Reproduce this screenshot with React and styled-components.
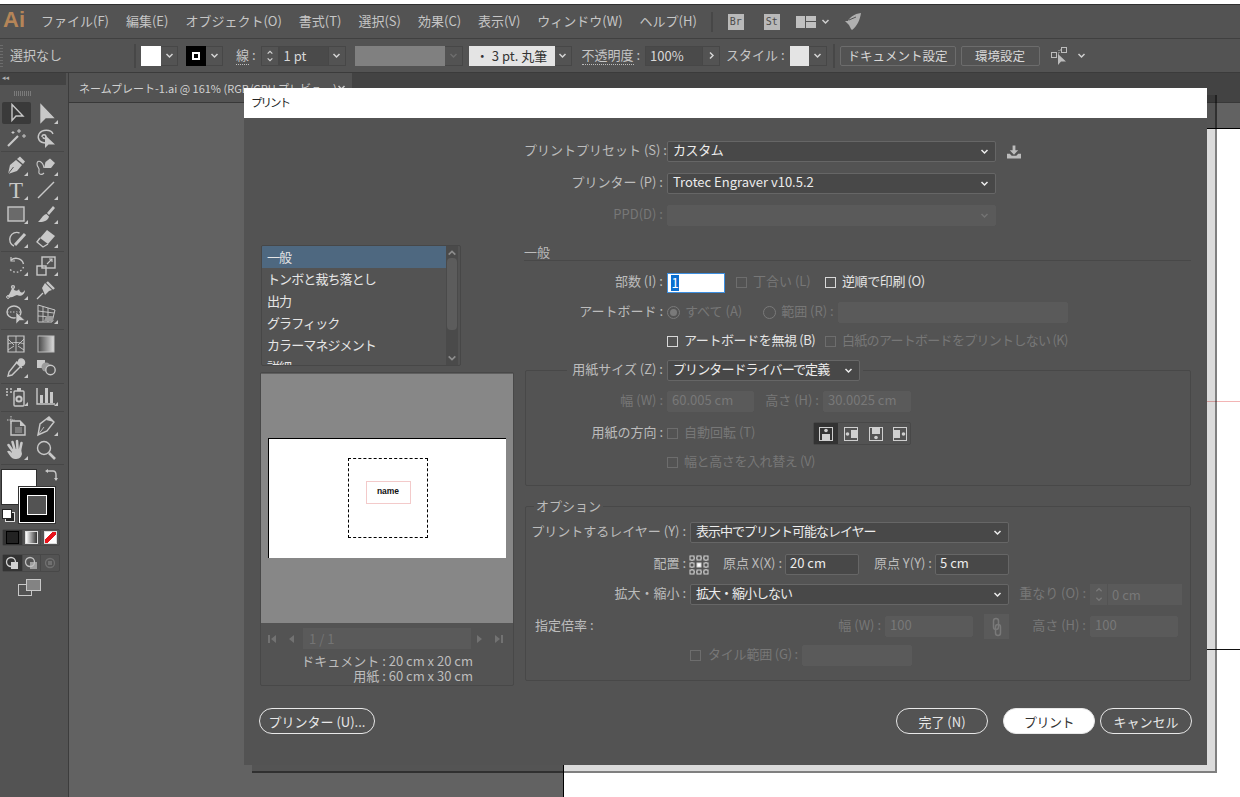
import React from "react";
import styled, { createGlobalStyle } from "styled-components";

const GlobalStyle = createGlobalStyle`
  html, body {
    margin: 0;
    padding: 0;
    background: #fff;
    overflow: hidden;
  }
  * {
    box-sizing: border-box;
  }
  body {
    font-family: "Noto Sans CJK JP", "Noto Sans", sans-serif;
    font-size: 13px;
  }
`;

const Page = styled.div`
  position: relative;
  width: 1240px;
  height: 797px;
  overflow: hidden;
  display: flex;
  flex-direction: column;
  padding-top: 4px;
  background: #fff;
`;

/* ---------- menu bar ---------- */

const MenuBar = styled.div`
  height: 35px;
  flex: none;
  display: flex;
  align-items: center;
  background: #535353;
  border-top: 1px solid #303030;
  border-bottom: 1px solid #404040;
  padding-left: 3px;
  color: #c6c6c6;
`;

const Logo = styled.span`
  font-family: "Liberation Sans", sans-serif;
  font-weight: 700;
  font-size: 22px;
  color: #b58558;
  width: 38px;
  padding-bottom: 3px;
`;

const MenuItem = styled.span`
  margin-right: 17px;
  padding-bottom: 3px;
  white-space: nowrap;
  font-size: 13px;
`;

const VLine = styled.span`
  width: 2px;
  height: ${(p) => p.$h || 20}px;
  background: #474747;
  margin-left: ${(p) => p.$ml || 0}px;
  margin-right: ${(p) => p.$mr || 0}px;
  flex: none;
`;

const AppBadge = styled.span`
  width: 16px;
  height: 16px;
  background: #b9b9b9;
  color: #4c4c4c;
  font-family: "DejaVu Sans Mono", monospace;
  font-size: 10px;
  line-height: 16px;
  text-align: center;
  margin-right: ${(p) => p.$mr || 0}px;
  flex: none;
`;

const BarIcon = styled.span`
  display: flex;
  flex: none;
  margin-left: ${(p) => p.$ml || 0}px;
  color: ${(p) => p.$color || "#cfcfcf"};
`;

/* ---------- control bar ---------- */

const OptionBar = styled.div`
  height: 34px;
  flex: none;
  display: flex;
  align-items: center;
  background: #535353;
  border-bottom: 1px solid #3b3b3b;
  color: #c6c6c6;
`;

const Grip = styled.span`
  width: 3px;
  height: 22px;
  margin-right: 7px;
  background: repeating-linear-gradient(to bottom, #6c6c6c 0 1px, transparent 1px 3px);
`;

const BarText = styled.span`
  white-space: nowrap;
  margin-left: ${(p) => p.$ml || 0}px;
  width: ${(p) => (p.$w ? `${p.$w}px` : "auto")};
  flex: none;
  padding-bottom: 2px;
`;

const Dotted = styled.span`
  border-bottom: 1px dotted #bdbdbd;
  line-height: 15px;
`;

const Swatch = styled.span`
  width: ${(p) => p.$w || 20}px;
  height: 20px;
  flex: none;
  margin-left: ${(p) => p.$ml || 0}px;
  background: ${(p) => p.$bg || "#fff"};
  display: flex;
  align-items: center;
  justify-content: center;
  color: #333;
  font-size: 13px;
  white-space: nowrap;
`;

const InnerStroke = styled.span`
  width: 8px;
  height: 8px;
  border: 2px solid #fff;
`;

const ChevBox = styled.span`
  width: ${(p) => p.$w || 17}px;
  height: 20px;
  flex: none;
  border: 1px solid #474747;
  border-left: none;
  display: flex;
  align-items: center;
  justify-content: center;
  color: ${(p) => p.$color || "#d4d4d4"};
`;

const FieldBox = styled.span`
  width: ${(p) => p.$w}px;
  height: 20px;
  flex: none;
  margin-left: ${(p) => p.$ml || 0}px;
  background: #4a4a4a;
  border: 1px solid #474747;
  padding-left: 4px;
  line-height: 18px;
  color: #d8d8d8;
  white-space: nowrap;
`;

const SpinBox = styled.span`
  width: 18px;
  height: 20px;
  flex: none;
  margin-left: ${(p) => p.$ml || 0}px;
  border: 1px solid #474747;
  color: #d4d4d4;
  display: flex;
  flex-direction: column;
  align-items: center;
  justify-content: space-around;
  padding: 2px 0;
`;

const BarButton = styled.span`
  height: 20px;
  width: ${(p) => p.$w}px;
  flex: none;
  margin-left: ${(p) => p.$ml || 0}px;
  border: 1px solid #6c6c6c;
  border-radius: 2px;
  color: #d8d8d8;
  font-size: 12.5px;
  line-height: 17px;
  text-align: center;
  white-space: nowrap;
`;

/* ---------- workspace ---------- */

const Workspace = styled.div`
  flex: 1;
  display: flex;
  min-height: 0;
`;

const ToolColumn = styled.div`
  width: 69px;
  flex: none;
  background: #535353;
  border-right: 1px solid #3c3c3c;
  display: flex;
  flex-direction: column;
`;

const PanelHead = styled.div`
  height: 12px;
  width: 66px;
  background: #434343;
  color: #b0b0b0;
  font-size: 7px;
  line-height: 11px;
  padding-left: 2px;
  font-family: "DejaVu Sans", sans-serif;
`;

const PanelGrip = styled.div`
  height: 17px;
  display: flex;
  align-items: center;
  justify-content: center;
  width: 44px;
  &::before {
    content: "";
    width: 17px;
    height: 5px;
    background: repeating-linear-gradient(to right, #7a7a7a 0 1px, transparent 1px 2px);
  }
`;

const ToolGroup = styled.div`
  display: grid;
  grid-template-columns: repeat(2, 30px);
  grid-auto-rows: 24px;
  margin: 0 4px ${(p) => (p.$mb === undefined ? 2 : p.$mb)}px 1px;
  padding-bottom: ${(p) => p.$pb || 1}px;
  border-bottom: 1px solid #474747;
`;

const Tool = styled.div`
  position: relative;
  display: flex;
  align-items: center;
  justify-content: center;
  color: #c8c8c8;
  border-radius: 2px;
  background: ${(p) => (p.$active ? "#3a3a3a" : "transparent")};
  margin: ${(p) => (p.$active ? "0 0 2px 1px" : "0")};
  font-family: "Liberation Serif", serif;
  font-size: 23px;
  line-height: 1;
  &::after {
    content: "";
    display: ${(p) => (p.$flag ? "block" : "none")};
    position: absolute;
    right: 3px;
    bottom: 2px;
    width: 0;
    height: 0;
    border-left: 4px solid transparent;
    border-bottom: 4px solid #c8c8c8;
  }
`;

const ColorArea = styled.div`
  position: relative;
  height: 60px;
  flex: none;
`;

const FillBox = styled.div`
  position: absolute;
  left: 1px;
  top: 4px;
  width: 36px;
  height: 36px;
  background: #fff;
  border: 1px solid #2e2e2e;
`;

const StrokeBox = styled.div`
  position: absolute;
  left: 19px;
  top: 22px;
  width: 36px;
  height: 36px;
  background: #000;
  border: 1px solid #fff;
  outline: 1px solid #333;
  display: flex;
  align-items: center;
  justify-content: center;
  &::before {
    content: "";
    width: 18px;
    height: 18px;
    background: #535353;
    border: 1px solid #fff;
  }
`;

const SwapMark = styled.div`
  position: absolute;
  left: 44px;
  top: 2px;
  color: #c8c8c8;
`;

const DefaultMark = styled.div`
  position: absolute;
  left: 2px;
  top: 44px;
  width: 10px;
  height: 10px;
  background: #fff;
  border: 1px solid #222;
  box-shadow: 3px 3px 0 -1px #222, 3px 3px 0 0 #ddd;
`;

const ModeRow = styled.div`
  display: grid;
  grid-template-columns: repeat(3, 1fr);
  width: 58px;
  height: ${(p) => p.$h}px;
  margin: ${(p) => p.$m};
  border: 1px solid #484848;
  border-radius: 2px;
`;

const ModeCell = styled.div`
  display: flex;
  align-items: center;
  justify-content: center;
  background: ${(p) => (p.$active ? "#333" : "transparent")};
  border-left: ${(p) => (p.$first ? "none" : "1px solid #484848")};
`;

const ModeSquare = styled.span`
  width: 13px;
  height: 13px;
  border: 1px solid ${(p) => p.$line || "#ddd"};
  background: ${(p) => p.$bg || "#000"};
`;

const ScreenMode = styled.div`
  display: flex;
  justify-content: center;
  width: 60px;
  margin-top: 7px;
  color: #c8c8c8;
`;

const DocColumn = styled.div`
  flex: 1;
  min-width: 0;
  display: flex;
  flex-direction: column;
`;

const TabBar = styled.div`
  height: 30px;
  flex: none;
  background: #434343;
  border-bottom: 1px solid #383838;
`;

const DocTab = styled.div`
  width: 283px;
  height: 29px;
  background: #535353;
  color: #d0d0d0;
  font-size: 11px;
  padding-left: 10px;
  padding-right: 6px;
  white-space: nowrap;
  display: flex;
  align-items: center;
  justify-content: space-between;
`;

const Canvas = styled.div`
  flex: 1;
  display: flex;
  min-height: 0;
  background: #626262;
  padding: 25px 0 0 494px;
`;

const Artboard = styled.div`
  position: relative;
  flex: 1;
  background: #fff;
  border-top: 1px solid #000;
  border-left: 1px solid #000;
`;

const GuideLine = styled.div`
  position: absolute;
  right: 0;
  top: ${(p) => p.$top}px;
  width: 33px;
  height: 1px;
  background: ${(p) => p.$color};
`;

/* ---------- print dialog ---------- */

const DialogShadow = styled.div`
  position: absolute;
  left: 252px;
  top: 95px;
  width: 965px;
  height: 678px;
  background: rgba(0, 0, 0, 0.14);
  border-right: 2px solid rgba(0, 0, 0, 0.42);
  border-bottom: 2px solid rgba(0, 0, 0, 0.42);
`;

const Dialog = styled.div`
  position: absolute;
  left: 244px;
  top: 88px;
  width: 963px;
  height: 677px;
  background: #535353;
  display: flex;
  flex-direction: column;
  color: #c4c4c4;
`;

const TitleBar = styled.div`
  height: 30px;
  flex: none;
  background: #fff;
  color: #222;
  font-size: 11.5px;
  letter-spacing: -2px;
  line-height: 29px;
  padding-left: 7px;
`;

const DialogBody = styled.div`
  flex: 1;
  display: grid;
  grid-template-columns: 254px 667px;
  column-gap: 10px;
  padding: 23px 0 0 16px;
`;

const LeftColumn = styled.div`
  display: flex;
  flex-direction: column;
  padding-top: 104px;
`;

const StepList = styled.div`
  position: relative;
  width: 200px;
  height: 121px;
  margin-left: 1px;
  border: 1px solid #474747;
  border-radius: 2px;
  overflow: hidden;
`;

const StepItem = styled.div`
  height: 22px;
  width: 184px;
  padding-left: 5px;
  line-height: 22px;
  letter-spacing: -0.9px;
  color: #e6e6e6;
  background: ${(p) => (p.$on ? "#4e6880" : "transparent")};
`;

const ScrollTrack = styled.div`
  position: absolute;
  right: 2px;
  top: 0;
  bottom: 0;
  width: 12px;
  background: #4a4a4a;
  display: flex;
  flex-direction: column;
  align-items: center;
  justify-content: space-between;
  padding: 2px 0;
  color: #8c8c8c;
`;

const ScrollThumb = styled.div`
  position: absolute;
  left: 1px;
  top: 12px;
  width: 10px;
  height: 72px;
  background: #5c5c5c;
  border-radius: 4px;
`;

const PreviewPanel = styled.div`
  margin-top: 6px;
  width: 254px;
  height: 314px;
  border: 1px solid #484848;
  border-radius: 2px;
  display: flex;
  flex-direction: column;
`;

const PreviewPaper = styled.div`
  height: 250px;
  flex: none;
  background: #878787;
  padding: 64px 7px 0 7px;
  border-top: 1px solid #5f5f5f;
`;

const PaperSheet = styled.div`
  height: 120px;
  background: #fff;
  border-top: 1px solid #000;
  border-left: 1px solid #000;
  display: flex;
  justify-content: center;
  padding-top: 19px;
`;

const DashBox = styled.div`
  width: 80px;
  height: 80px;
  border: 1px dashed #000;
  display: flex;
  justify-content: center;
  padding-top: 22px;
`;

const NameBox = styled.div`
  width: 45px;
  height: 23px;
  border: 1px solid #f3caca;
  background: #fff;
  margin-left: 1px;
  color: #111;
  font-family: "Liberation Sans", sans-serif;
  font-weight: 700;
  font-size: 8.5px;
  line-height: 18px;
  text-align: center;
`;

const PagerRow = styled.div`
  height: 21px;
  margin-top: 5px;
  display: flex;
  align-items: center;
  color: #727272;
`;

const PagerIcon = styled.span`
  width: 12px;
  display: flex;
  justify-content: center;
  margin-left: ${(p) => p.$ml || 0}px;
`;

const PagerField = styled.div`
  width: 168px;
  height: 21px;
  margin-left: 5px;
  background: #5a5a5a;
  padding-left: 6px;
  line-height: 21px;
  color: #747474;
`;

const DocInfo = styled.div`
  padding: 5px 40px 0 0;
  text-align: right;
  color: #bdbdbd;
  line-height: 14.5px;
  font-size: 13px;
`;

const PillButton = styled.button`
  width: ${(p) => p.$w}px;
  height: 26px;
  flex: none;
  border-radius: 13px;
  border: 1px solid #e8e8e8;
  background: ${(p) => (p.$primary ? "#fff" : "transparent")};
  color: ${(p) => (p.$primary ? "#333" : "#e8e8e8")};
  font-family: inherit;
  font-size: 13px;
  letter-spacing: ${(p) => p.$ls || 0}px;
  padding: 0;
  margin-left: ${(p) => p.$ml || 0}px;
`;

const PrinterButton = styled(PillButton)`
  margin-top: 22px;
  margin-left: -1px;
`;

const RightColumn = styled.div`
  display: flex;
  flex-direction: column;
  min-width: 0;
`;

const Row = styled.div`
  display: flex;
  align-items: center;
  height: ${(p) => p.$h || 21}px;
  flex: none;
  margin-top: ${(p) => p.$mt || 0}px;
  margin-left: ${(p) => p.$ml || 0}px;
`;

const Label = styled.span`
  flex: none;
  width: ${(p) => (p.$w ? `${p.$w}px` : "auto")};
  margin-left: ${(p) => p.$ml || 0}px;
  margin-right: ${(p) => (p.$mr === undefined ? 4 : p.$mr)}px;
  padding-bottom: 4px;
  text-align: ${(p) => p.$align || "right"};
  letter-spacing: ${(p) => p.$ls || 0}px;
  white-space: nowrap;
  color: ${(p) => (p.$off ? "#777" : p.$bright ? "#e4e4e4" : "#bcbcbc")};
`;

const Select = styled.div`
  flex: none;
  width: ${(p) => p.$w}px;
  height: 21px;
  border: 1px solid ${(p) => (p.$off ? "#5a5a5a" : "#666")};
  border-radius: 2px;
  background: ${(p) => (p.$off ? "#5a5a5a" : "#484848")};
  color: ${(p) => (p.$off ? "#737373" : "#ececec")};
  letter-spacing: ${(p) => p.$ls || 0}px;
  display: flex;
  align-items: center;
  justify-content: space-between;
  padding: 0 6px 4px 5px;
  white-space: nowrap;
  & > svg {
    margin-top: 4px;
  }
`;

const TextField = styled.div`
  flex: none;
  width: ${(p) => p.$w}px;
  height: 21px;
  margin-left: ${(p) => p.$ml || 0}px;
  border-radius: 2px;
  border: 1px solid ${(p) => (p.$off ? "#5a5a5a" : "#666")};
  background: ${(p) => (p.$off ? "#5a5a5a" : "#484848")};
  color: ${(p) => (p.$off ? "#787878" : "#ececec")};
  line-height: 16px;
  padding-left: 4px;
  white-space: nowrap;
`;

const FocusField = styled.div`
  flex: none;
  width: 58px;
  height: 20px;
  background: #fff;
  border: 1px solid #3d8fe0;
  color: #fff;
  padding: 1px 0 0 3px;
  line-height: 16px;
  & > span {
    display: inline-block;
    background: #0b6fd0;
    width: 8px;
    height: 16px;
    text-align: center;
  }
`;

const Check = styled.span`
  width: 11px;
  height: 11px;
  flex: none;
  margin-left: ${(p) => p.$ml || 0}px;
  margin-right: ${(p) => p.$mr || 6}px;
  border: 1px solid ${(p) => (p.$off ? "#6d6d6d" : "#d8d8d8")};
`;

const Radio = styled.span`
  width: 13px;
  height: 13px;
  flex: none;
  margin-left: ${(p) => p.$ml || 0}px;
  margin-right: 5px;
  border-radius: 50%;
  border: 1px solid #7a7a7a;
  display: flex;
  align-items: center;
  justify-content: center;
  &::before {
    content: "";
    display: ${(p) => (p.$on ? "block" : "none")};
    width: 7px;
    height: 7px;
    border-radius: 50%;
    background: #7a7a7a;
  }
`;

const SectionHead = styled.div`
  height: 18px;
  flex: none;
  margin-top: 17px;
  border-bottom: 1px solid #484848;
  line-height: 17px;
  color: #bcbcbc;
`;

const FieldGroup = styled.div`
  height: ${(p) => p.$h}px;
  flex: none;
  margin-top: ${(p) => p.$mt}px;
  margin-left: 1px;
  border: 1px solid #484848;
  border-radius: 2px;
`;

const LegendRow = styled(Row)`
  width: 296px;
  background: #535353;
`;

const LegendText = styled.div`
  width: fit-content;
  height: 18px;
  margin: -10px 0 0 8px;
  padding: 0 2px;
  background: #535353;
  color: #bcbcbc;
  line-height: 17px;
`;

const OrientGroup = styled.div`
  flex: none;
  display: grid;
  grid-template-columns: 24px 25px 25px 24px;
  height: 23px;
  width: 98px;
  margin-left: 61px;
  border: 1px solid #484848;
  border-radius: 2px;
`;

const OrientCell = styled.div`
  display: flex;
  align-items: center;
  justify-content: center;
  background: ${(p) => (p.$on ? "#333" : "transparent")};
  color: #cfcfcf;
`;

const LinkButton = styled.div`
  flex: none;
  width: 25px;
  height: 25px;
  margin-left: 11px;
  background: #5a5a5a;
  color: #797979;
  display: flex;
  align-items: center;
  justify-content: center;
`;

const StepperField = styled.div`
  flex: none;
  width: 92px;
  height: 21px;
  background: #5a5a5a;
  color: #787878;
  display: flex;
  align-items: center;
  padding-bottom: 0;
`;

const StepperArrows = styled.span`
  width: 18px;
  height: 100%;
  border-right: 1px solid #535353;
  margin-right: 4px;
  display: flex;
  flex-direction: column;
  align-items: center;
  justify-content: space-around;
  padding: 2px 0;
`;

const FooterRight = styled.div`
  display: flex;
  margin-top: 27px;
  justify-content: flex-end;
  margin-right: -1px;
`;

/* ---------- small drawings ---------- */

const Chev = ({ dir = "down", size = 9 }) => {
  const d = {
    down: "M1.5 3 L4.5 6 L7.5 3",
    up: "M1.5 6 L4.5 3 L7.5 6",
    right: "M3 1.5 L6 4.5 L3 7.5",
  }[dir];
  return (
    <svg width={size} height={size} viewBox="0 0 9 9" fill="none" stroke="currentColor" strokeWidth="1.5">
      <path d={d} />
    </svg>
  );
};

const Ico = ({ children }) => (
  <svg width="22" height="22" viewBox="0 0 22 22" fill="none" stroke="currentColor" strokeWidth="1.4">
    {children}
  </svg>
);

const tools1 = [
  {
    active: true,
    svg: <path d="M6 2.5 V18.5 L10 14 H17 Z" stroke="#c8c8c8" />,
  },
  { flag: true, svg: <path d="M6 2 V19 L10.5 14.5 H18 Z" fill="currentColor" /> },
  {
    svg: (
      <>
        <path d="M3 19 L13 9" strokeWidth="2.2" />
        <path d="M14 2 V6 M12 4 H16 M19 7 V11 M17 9 H21 M8 4 V7 M6.5 5.5 H9.5" strokeWidth="1" />
      </>
    ),
  },
  {
    svg: (
      <>
        <path d="M11 16 C4 16 2 11 4 7 C7 2 16 2 18 7" />
        <path d="M7 10 C7 7 11 7 11 10 C11 12 8 12 8 10" />
        <path d="M10 8 V21 L13.5 17.5 H20 Z" fill="currentColor" stroke="none" />
      </>
    ),
  },
];

const tools2 = [
  {
    flag: true,
    svg: (
      <>
        <path d="M3 19 L5 10 L11 5 L17 10 L12 16 Z" fill="currentColor" stroke="none" />
        <path d="M12 4 L15 1.5 L20 6.5 L18 9" fill="currentColor" stroke="none" />
        <path d="M3 19 L8.5 12" stroke="#535353" strokeWidth="1" />
      </>
    ),
  },
  {
    flag: true,
    svg: (
      <>
        <path d="M9 13 L10.5 7 L15 3.5 L20 8 L16 13 Z" fill="currentColor" stroke="none" />
        <path d="M9 13 C8 6 2 4 2 9 C2 13 5 12 4 16 C3 20 7 20 9 18" strokeWidth="1.1" />
      </>
    ),
  },
  { flag: true, text: "T" },
  { flag: true, svg: <path d="M3 19 L19 3" /> },
  { flag: true, svg: <rect x="3" y="4" width="16" height="14" fill="#6a6a6a" stroke="#c8c8c8" /> },
  {
    flag: true,
    svg: (
      <>
        <path d="M12 10 L18 3 L20 5 L14 12 Z" fill="currentColor" stroke="none" />
        <path d="M11.5 11 L14 13.5 C13 18 8 19.5 3 19 C6 17 7 12 11.5 11 Z" fill="currentColor" stroke="none" />
      </>
    ),
  },
  {
    flag: true,
    svg: (
      <>
        <path d="M14.5 6 A7 7 0 1 0 9 19" />
        <path d="M10 18 L20 7" strokeWidth="3" />
      </>
    ),
  },
  {
    flag: true,
    svg: (
      <>
        <path d="M12 3 L20 9 L13 17 L5 11 Z" fill="currentColor" stroke="none" />
        <path d="M5 11 L2 15 L8 20 L13 17" />
      </>
    ),
  },
];

const tools3 = [
  {
    flag: true,
    svg: (
      <>
        <path d="M6 5 C10 2 17 3 18.5 9" />
        <path d="M6 2 V6 H10" strokeWidth="1.2" />
        <path d="M18.5 12 A8 8 0 0 1 4 13" strokeDasharray="1.6 2" />
      </>
    ),
  },
  {
    flag: true,
    svg: (
      <>
        <rect x="2" y="11" width="9" height="9" />
        <rect x="7" y="2" width="13" height="11" />
        <path d="M12 9 L17 4 M14 4 H17 V7" strokeWidth="1.1" />
      </>
    ),
  },
  {
    flag: true,
    svg: (
      <>
        <path d="M2 17 C6 15 5 11 8 9 C10 13 13 12 14 10 C15 14 17 15 20 11 C20 16 15 18 12 16 C8 17 8 19 4 18" fill="currentColor" stroke="none" />
        <circle cx="3" cy="18" r="1.4" stroke="#c8c8c8" strokeWidth="1" />
        <circle cx="8" cy="8" r="1.4" />
      </>
    ),
  },
  {
    svg: (
      <>
        <path d="M10 4 L17 11 L14 12 L10 16 L7 9 Z" fill="currentColor" stroke="none" />
        <path d="M12 3 L19 10" strokeWidth="2.4" />
        <path d="M8 14 L2 20" strokeWidth="1.3" />
      </>
    ),
  },
  {
    flag: true,
    svg: (
      <>
        <ellipse cx="9" cy="9" rx="7" ry="6" />
        <path d="M2 9 H15" strokeDasharray="1.5 1.5" strokeWidth="1" />
        <path d="M11 9 V21 L14.5 17.5 H20 Z" fill="currentColor" stroke="#535353" strokeWidth="0.6" />
      </>
    ),
  },
  {
    flag: true,
    svg: (
      <>
        <path d="M3 2 L20 7 L17 19 L3 19 Z" strokeWidth="1" />
        <path d="M3 8 L19 10 M3 13 L18 14 M8 3.5 V19 M13 5 V19" strokeWidth="0.9" />
        <path d="M9 18 H19 L16 13 H11 Z" fill="#9a9a9a" stroke="none" />
      </>
    ),
  },
];

const tools4 = [
  {
    svg: (
      <>
        <path d="M3 3 H19 V19 H3 Z" strokeWidth="1.2" />
        <path d="M11 3 V19 M3 11 C7 9 15 9 19 11 M3 6 L9 12 M19 6 L13 12 M3 17 L9 13 M19 17 L13 13" strokeWidth="0.9" />
      </>
    ),
  },
  {
    svg: (
      <>
        <defs>
          <linearGradient id="toolGrad" x1="0" x2="1" y1="0" y2="0">
            <stop offset="0" stopColor="#444" />
            <stop offset="1" stopColor="#ddd" />
          </linearGradient>
        </defs>
        <rect x="3" y="3" width="16" height="16" fill="url(#toolGrad)" stroke="#bdbdbd" strokeWidth="1" />
      </>
    ),
  },
  {
    flag: true,
    svg: (
      <>
        <path d="M12 5 L4 15 L3 19 L7 18 L16 9 Z" />
        <path d="M11 5 L17 11 M14 3 C15 1.5 17 1.5 18.5 3 C20 5 20 6.5 18.5 8 L16 9 L13 6 Z" fill="currentColor" />
      </>
    ),
  },
  {
    svg: (
      <>
        <rect x="2" y="3" width="8" height="8" fill="currentColor" stroke="none" />
        <circle cx="11" cy="10" r="4.5" fill="#9a9a9a" stroke="none" />
        <circle cx="15.5" cy="13" r="4.7" fill="#535353" />
      </>
    ),
  },
];

const tools5 = [
  {
    flag: true,
    svg: (
      <>
        <path d="M1 4 H3 M5 4 H7 M1 7 H3 M5 7 H7 M1 10 H3" strokeWidth="1.6" />
        <path d="M12 3 H16 V6 H12 Z" fill="currentColor" stroke="none" />
        <rect x="9" y="6" width="10" height="15" rx="1" />
        <circle cx="14" cy="14" r="2.6" strokeWidth="2" />
      </>
    ),
  },
  {
    flag: true,
    svg: (
      <>
        <path d="M2 3 V19 H20" strokeWidth="1.4" />
        <path d="M5 10 H8 V18 H5 Z M10 3 H13 V18 H10 Z M15 7 H18 V18 H15 Z" fill="currentColor" stroke="none" />
      </>
    ),
  },
];

const tools6 = [
  {
    svg: (
      <>
        <path d="M6 1 V9 M2 5 H10" strokeWidth="1" strokeDasharray="1.5 1" />
        <path d="M6 6 H15 L20 11 V20 H6 Z" />
        <path d="M15 6 V11 H20 Z" fill="currentColor" stroke="none" />
        <path d="M10 12 H17 V18 H10 Z" fill="#7c7c7c" stroke="none" />
      </>
    ),
  },
  {
    flag: true,
    svg: (
      <>
        <path d="M3 20 L5 9 L14 2 L19 7 L12 16 Z" />
        <path d="M11 5 L19 7 L14 2 Z" fill="currentColor" stroke="none" />
        <path d="M3 20 L9 12" strokeWidth="0.9" />
      </>
    ),
  },
  {
    flag: true,
    svg: (
      <>
        <path d="M7 11 L3.5 6 M9.5 10 L7.5 3 M12.5 10 L12 2 M15 11 L16.5 4" strokeWidth="2.6" strokeLinecap="round" />
        <path d="M6 10 H16 L17 15 C16 19 14 20 10 20 C7 20 5 17 2 12.5 C4 11 5 12 7 14 Z" fill="currentColor" stroke="none" />
      </>
    ),
  },
  {
    svg: (
      <>
        <circle cx="9" cy="9" r="6.5" />
        <path d="M14 14 L20 20" strokeWidth="2.6" />
      </>
    ),
  },
];

const ToolCell = ({ t }) => (
  <Tool $flag={t.flag} $active={t.active}>
    {t.text ? t.text : <Ico>{t.svg}</Ico>}
  </Tool>
);

const ToolBlock = ({ list, ...rest }) => (
  <ToolGroup {...rest}>
    {list.map((t, i) => (
      <ToolCell t={t} key={i} />
    ))}
  </ToolGroup>
);

const OrientIcon = ({ rot = 0 }) => (
  <svg width="16" height="16" viewBox="0 0 16 16" fill="none" stroke="currentColor" strokeWidth="1">
    <rect x="1.5" y="1.5" width="13" height="13" />
    <g transform={`rotate(${rot} 8 8)`}>
      <circle cx="8" cy="4.5" r="1.8" fill="currentColor" stroke="none" />
      <path d="M4 8 H12 V14.5 H4 Z" fill="currentColor" stroke="none" />
    </g>
  </svg>
);

const ReferenceGrid = () => (
  <svg width="20" height="20" viewBox="0 0 20 20" fill="none" stroke="#d4d4d4" strokeWidth="1">
    {[0, 1, 2].map((r) =>
      [0, 1, 2].map((c) => (
        <rect key={`${r}${c}`} x={1 + c * 7} y={1 + r * 7} width="4" height="4" fill={r === 1 && c === 1 ? "#fff" : "none"} />
      ))
    )}
    <path d="M5 3 H8 M12 3 H15 M5 17 H8 M12 17 H15 M3 5 V8 M3 12 V15 M17 5 V8 M17 12 V15" strokeDasharray="1 1" />
  </svg>
);

export default function App() {
  return (
    <Page>
      <GlobalStyle />
      <MenuBar>
        <Logo>Ai</Logo>
        {["ファイル(F)", "編集(E)", "オブジェクト(O)", "書式(T)", "選択(S)", "効果(C)", "表示(V)", "ウィンドウ(W)", "ヘルプ(H)"].map((m) => (
          <MenuItem key={m}>{m}</MenuItem>
        ))}
        <VLine $h={20} $ml={-3} $mr={15} />
        <AppBadge $mr={20}>Br</AppBadge>
        <AppBadge $mr={16}>St</AppBadge>
        <svg width="20" height="12" viewBox="0 0 20 12" fill="#c0c0c0">
          <rect x="0" y="0" width="9" height="12" />
          <rect x="10" y="0" width="10" height="5" />
          <rect x="10" y="6" width="10" height="6" />
        </svg>
        <BarIcon $ml={5}>
          <Chev />
        </BarIcon>
        <BarIcon $ml={14} $color="#b0b0b0">
          <svg width="18" height="19" viewBox="0 0 18 19" fill="currentColor">
            <path d="M17 1 C10 2 6 5 4 9 L1 9 L5 13 L7 17 L8 18 C13 14 16 8 17 1 Z" />
            <path d="M5 8 L12 5" stroke="#535353" fill="none" />
          </svg>
        </BarIcon>
      </MenuBar>

      <OptionBar>
        <Grip />
        <BarText $w={124}>選択なし</BarText>
        <VLine $h={24} $mr={5} />
        <Swatch />
        <ChevBox>
          <Chev />
        </ChevBox>
        <Swatch $bg="#000" $ml={8}>
          <InnerStroke />
        </Swatch>
        <ChevBox>
          <Chev />
        </ChevBox>
        <BarText $ml={13}>
          <Dotted>線</Dotted> :
        </BarText>
        <SpinBox $ml={5}>
          <Chev dir="up" size={8} />
          <Chev size={8} />
        </SpinBox>
        <FieldBox $w={50}>1 pt</FieldBox>
        <ChevBox>
          <Chev />
        </ChevBox>
        <Swatch $bg="#808080" $w={90} $ml={9} />
        <ChevBox $color="#6d6d6d" $w={18}>
          <Chev />
        </ChevBox>
        <Swatch $bg="#e4e4e4" $w={86} $ml={6}>
          ・ 3 pt. 丸筆
        </Swatch>
        <ChevBox>
          <Chev />
        </ChevBox>
        <BarText $ml={10}>
          <Dotted>不透明度</Dotted> :
        </BarText>
        <FieldBox $w={58} $ml={5}>100%</FieldBox>
        <ChevBox>
          <Chev dir="right" />
        </ChevBox>
        <BarText $ml={6}>スタイル :</BarText>
        <Swatch $bg="#e4e4e4" $w={19} $ml={5} />
        <ChevBox $w={18}>
          <Chev />
        </ChevBox>
        <VLine $h={24} $ml={6} $mr={5} />
        <BarButton $w={116}>ドキュメント設定</BarButton>
        <BarButton $w={79} $ml={5}>環境設定</BarButton>
        <BarIcon $ml={10} $color="#bcbcbc">
          <svg width="20" height="20" viewBox="0 0 20 20" fill="none" stroke="currentColor" strokeWidth="1">
            <rect x="1.5" y="6.5" width="5" height="5" />
            <rect x="11.5" y="1.5" width="5" height="5" />
            <path d="M6 8 H9 V4 H12" strokeDasharray="1 1" />
            <path d="M8 8 V19 L11 15.5 H16 Z" fill="currentColor" stroke="none" />
          </svg>
        </BarIcon>
        <BarIcon $ml={7}>
          <Chev />
        </BarIcon>
      </OptionBar>

      <Workspace>
        <ToolColumn>
          <PanelHead>◂◂</PanelHead>
          <PanelGrip />
          <ToolBlock list={tools1} />
          <ToolBlock list={tools2} />
          <ToolBlock list={tools3} $pb={3} />
          <ToolBlock list={tools4} $pb={3} $mb={0} />
          <ToolBlock list={tools5} $pb={3} />
          <ToolBlock list={tools6} $pb={2} $mb={0} />
          <ColorArea>
            <FillBox />
            <StrokeBox />
            <SwapMark>
              <svg width="14" height="14" viewBox="0 0 14 14" fill="none" stroke="currentColor" strokeWidth="1.4">
                <path d="M3 3 H9 Q12 3 12 7 V12" />
                <path d="M1 3 L4 1 V5 Z M10 10 H14 L12 13 Z" fill="currentColor" stroke="none" />
              </svg>
            </SwapMark>
            <DefaultMark />
          </ColorArea>
          <ModeRow $h={17} $m="4px 0 0 2px">
            <ModeCell $first $active>
              <ModeSquare $bg="#222" $line="#000" />
            </ModeCell>
            <ModeCell>
              <ModeSquare $bg="linear-gradient(to right, #fff, #333)" />
            </ModeCell>
            <ModeCell>
              <ModeSquare $bg="linear-gradient(135deg, #fff 36%, #e8141c 36% 62%, #fff 62%)" />
            </ModeCell>
          </ModeRow>
          <ModeRow $h={18} $m="8px 0 0 2px">
            <ModeCell $first $active>
              <svg width="14" height="14" viewBox="0 0 14 14" fill="none" stroke="#d0d0d0" strokeWidth="1.3">
                <circle cx="6" cy="6" r="4.5" />
                <rect x="6" y="6" width="7" height="7" fill="#d0d0d0" stroke="none" />
              </svg>
            </ModeCell>
            <ModeCell>
              <svg width="14" height="14" viewBox="0 0 14 14" fill="none" stroke="#c0c0c0" strokeWidth="1.3">
                <rect x="6" y="6" width="7" height="7" fill="#a0a0a0" stroke="none" />
                <circle cx="6" cy="6" r="4.5" />
              </svg>
            </ModeCell>
            <ModeCell>
              <svg width="12" height="12" viewBox="0 0 12 12" fill="none" stroke="#707070" strokeWidth="1.3">
                <circle cx="6" cy="6" r="4.5" />
                <rect x="4" y="4" width="4" height="4" fill="#707070" stroke="none" />
              </svg>
            </ModeCell>
          </ModeRow>
          <ScreenMode>
            <svg width="24" height="18" viewBox="0 0 24 18" fill="none" stroke="currentColor" strokeWidth="1">
              <rect x="0.5" y="5.5" width="13" height="11" />
              <rect x="8.5" y="0.5" width="14" height="11" fill="#838383" />
            </svg>
          </ScreenMode>
        </ToolColumn>

        <DocColumn>
          <TabBar>
            <DocTab>
              ネームプレート-1.ai @ 161% (RGB/GPU プレビュー)
              <Chev />
            </DocTab>
          </TabBar>
          <Canvas>
            <Artboard>
              <GuideLine $top={272} $color="#f3b5b5" />
              <GuideLine $top={520} $color="#111" />
            </Artboard>
          </Canvas>
        </DocColumn>
      </Workspace>

      <DialogShadow />
      <Dialog>
        <TitleBar>プリント</TitleBar>
        <DialogBody>
          <LeftColumn>
            <StepList>
              <StepItem $on>一般</StepItem>
              <StepItem>トンボと裁ち落とし</StepItem>
              <StepItem>出力</StepItem>
              <StepItem>グラフィック</StepItem>
              <StepItem>カラーマネジメント</StepItem>
              <StepItem>詳細</StepItem>
              <ScrollTrack>
                <Chev dir="up" size={10} />
                <ScrollThumb />
                <Chev size={10} />
              </ScrollTrack>
            </StepList>
            <PreviewPanel>
              <PreviewPaper>
                <PaperSheet>
                  <DashBox>
                    <NameBox>name</NameBox>
                  </DashBox>
                </PaperSheet>
              </PreviewPaper>
              <PagerRow>
                <PagerIcon $ml={5}>
                  <svg width="10" height="10" viewBox="0 0 10 10" fill="currentColor">
                    <path d="M1 1 H3 V9 H1 Z M9 1 V9 L4 5 Z" />
                  </svg>
                </PagerIcon>
                <PagerIcon $ml={8}>
                  <svg width="10" height="10" viewBox="0 0 10 10" fill="currentColor">
                    <path d="M7 1 V9 L2 5 Z" />
                  </svg>
                </PagerIcon>
                <PagerField>1 / 1</PagerField>
                <PagerIcon $ml={2}>
                  <svg width="10" height="10" viewBox="0 0 10 10" fill="currentColor">
                    <path d="M3 1 V9 L8 5 Z" />
                  </svg>
                </PagerIcon>
                <PagerIcon $ml={8}>
                  <svg width="10" height="10" viewBox="0 0 10 10" fill="currentColor">
                    <path d="M9 1 H7 V9 H9 Z M1 1 V9 L6 5 Z" />
                  </svg>
                </PagerIcon>
              </PagerRow>
              <DocInfo>
                ドキュメント : 20 cm x 20 cm
                <br />
                用紙 : 60 cm x 30 cm
              </DocInfo>
            </PreviewPanel>
            <PrinterButton $w={116}>プリンター (U)...</PrinterButton>
          </LeftColumn>

          <RightColumn>
            <Row>
              <Label $w={139}>プリントプリセット (S) :</Label>
              <Select $w={329} $ls={-0.4}>
                カスタム
                <Chev />
              </Select>
              <BarIcon $ml={11} $color="#bcbcbc">
                <svg width="14" height="14" viewBox="0 0 15 14" fill="currentColor">
                  <path d="M6 0 H9 V5 H12 L7.5 10 L3 5 H6 Z" />
                  <path d="M0 9 H3 L5 11 H10 L12 9 H15 V14 H0 Z" />
                </svg>
              </BarIcon>
            </Row>
            <Row $mt={11}>
              <Label $w={139}>プリンター (P) :</Label>
              <Select $w={329}>
                Trotec Engraver v10.5.2
                <Chev />
              </Select>
            </Row>
            <Row $mt={11}>
              <Label $w={139} $off>PPD(D) :</Label>
              <Select $w={329} $off>
                <span />
                <Chev />
              </Select>
            </Row>

            <SectionHead>一般</SectionHead>

            <Row $mt={11}>
              <Label $w={139}>部数 (I) :</Label>
              <FocusField>
                <span>1</span>
              </FocusField>
              <Check $ml={11} $off />
              <Label $off $w={58} $mr={14} $align="left">丁合い (L)</Label>
              <Check />
              <Label $bright $mr={0} $ls={-0.4}>逆順で印刷 (O)</Label>
            </Row>
            <Row $mt={9}>
              <Label $w={139}>アートボード :</Label>
              <Radio $on />
              <Label $off $mr={21}>すべて (A)</Label>
              <Radio />
              <Label $off>範囲 (R) :</Label>
              <TextField $w={230} $off />
            </Row>
            <Row $mt={8}>
              <Label $w={143} $mr={0} />
              <Check />
              <Label $bright $w={130} $mr={11} $align="left" $ls={-0.4}>アートボードを無視 (B)</Label>
              <Check $off />
              <Label $off $mr={0} $ls={-0.7}>白紙のアートボードをプリントしない (K)</Label>
            </Row>

            <FieldGroup $mt={18} $h={116}>
              <LegendRow $mt={-11} $ml={41}>
                <Label $w={96}>用紙サイズ (Z) :</Label>
                <Select $w={193} $ls={-0.9}>
                  プリンタードライバーで定義
                  <Chev />
                </Select>
              </LegendRow>
              <Row $mt={10}>
                <Label $w={137} $off>幅 (W) :</Label>
                <TextField $w={87} $off>60.005 cm</TextField>
                <Label $w={65} $off>高さ (H) :</Label>
                <TextField $w={88} $off>30.0025 cm</TextField>
              </Row>
              <Row $mt={10} $h={23}>
                <Label $w={137}>用紙の方向 :</Label>
                <Check $off />
                <Label $off $w={68} $mr={0} $align="left">自動回転 (T)</Label>
                <OrientGroup>
                  <OrientCell $on>
                    <OrientIcon />
                  </OrientCell>
                  <OrientCell>
                    <OrientIcon rot={270} />
                  </OrientCell>
                  <OrientCell>
                    <OrientIcon rot={180} />
                  </OrientCell>
                  <OrientCell>
                    <OrientIcon rot={90} />
                  </OrientCell>
                </OrientGroup>
              </Row>
              <Row $mt={7}>
                <Label $w={141} $mr={0} />
                <Check $off />
                <Label $off $ls={-0.4}>幅と高さを入れ替え (V)</Label>
              </Row>
            </FieldGroup>

            <FieldGroup $mt={20} $h={175}>
              <LegendText>オプション</LegendText>
              <Row $mt={7}>
                <Label $w={160}>プリントするレイヤー (Y) :</Label>
                <Select $w={319} $ls={-1}>
                  表示中でプリント可能なレイヤー
                  <Chev />
                </Select>
              </Row>
              <Row $mt={11}>
                <Label $w={160} $mr={3}>配置 :</Label>
                <ReferenceGrid />
                <Label $w={73} $mr={3}>原点 X(X) :</Label>
                <TextField $w={74}>20 cm</TextField>
                <Label $w={73} $mr={3}>原点 Y(Y) :</Label>
                <TextField $w={74}>5 cm</TextField>
              </Row>
              <Row $mt={9}>
                <Label $w={160}>拡大・縮小 :</Label>
                <Select $w={319} $ls={-1}>
                  拡大・縮小しない
                  <Chev />
                </Select>
                <Label $w={77} $off $mr={4}>重なり (O) :</Label>
                <StepperField>
                  <StepperArrows>
                    <Chev dir="up" size={8} />
                    <Chev size={8} />
                  </StepperArrows>
                  0 cm
                </StepperField>
              </Row>
              <Row $mt={11}>
                <Label $w={160} $align="left" $ml={9} $mr={0}>指定倍率 :</Label>
                <Label $w={186} $off>幅 (W) :</Label>
                <TextField $w={88} $off>100</TextField>
                <LinkButton>
                  <svg width="10" height="20" viewBox="0 0 10 20" fill="none" stroke="currentColor" strokeWidth="1.5">
                    <rect x="1.5" y="1.5" width="5" height="11" rx="2.5" />
                    <rect x="3.5" y="7.5" width="5" height="11" rx="2.5" />
                  </svg>
                </LinkButton>
                <Label $w={77} $off>高さ (H) :</Label>
                <TextField $w={88} $off>100</TextField>
              </Row>
              <Row $mt={8}>
                <Check $ml={164} $off />
                <Label $w={91} $off $ls={-0.2}>タイル範囲 (G) :</Label>
                <TextField $w={110} $off />
              </Row>
            </FieldGroup>

            <FooterRight>
              <PillButton $w={92}>完了 (N)</PillButton>
              <PillButton $w={92} $ml={15} $ls={-0.5} $primary>プリント</PillButton>
              <PillButton $w={92} $ml={5}>キャンセル</PillButton>
            </FooterRight>
          </RightColumn>
        </DialogBody>
      </Dialog>
    </Page>
  );
}
